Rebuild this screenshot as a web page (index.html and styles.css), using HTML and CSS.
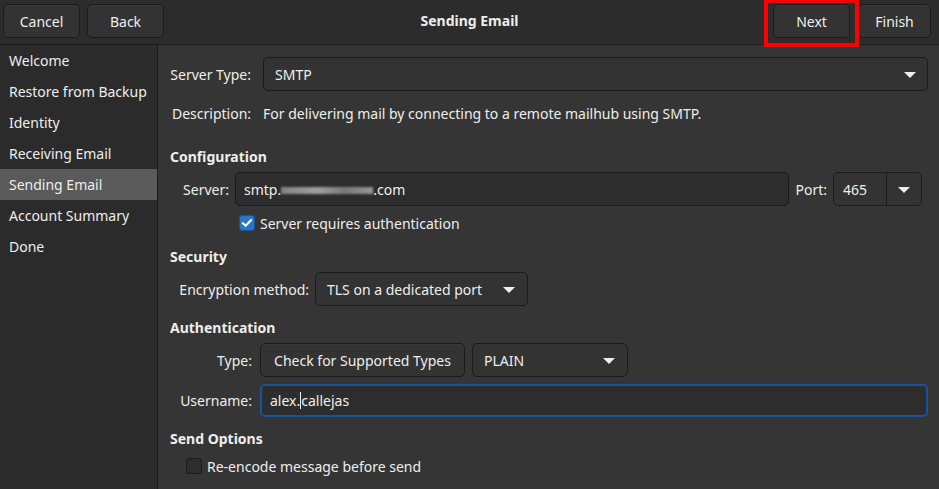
FILE: index.html
```html
<!DOCTYPE html>
<html>
<head>
<meta charset="utf-8">
<link rel="stylesheet" href="styles.css">
</head>
<body>
<div class="window">
  <header class="headerbar">
    <div class="hb-left">
      <button class="btn hb-btn">Cancel</button>
      <button class="btn hb-btn">Back</button>
    </div>
    <div class="hb-title">Sending Email</div>
    <div class="hb-right">
      <button class="btn hb-btn next">Next<span class="annot"></span></button>
      <button class="btn hb-btn finish">Finish</button>
    </div>
  </header>
  <div class="body">
    <nav class="sidebar">
      <div class="side-item">Welcome</div>
      <div class="side-item">Restore from Backup</div>
      <div class="side-item">Identity</div>
      <div class="side-item">Receiving Email</div>
      <div class="side-item selected">Sending Email</div>
      <div class="side-item">Account Summary</div>
      <div class="side-item">Done</div>
    </nav>
    <main class="content">
      <div class="row r-type">
        <span class="lbl lbl-top">Server Type:</span>
        <div class="combo combo-wide"><span>SMTP</span><span class="arrow"></span></div>
      </div>
      <div class="row r-desc">
        <span class="lbl lbl-top">Description:</span>
        <span class="value">For delivering mail by connecting to a remote mailhub using SMTP.</span>
      </div>

      <div class="heading h-config">Configuration</div>
      <div class="row r-server">
        <span class="lbl lbl-server">Server:</span>
        <div class="entry entry-server">smtp.<span class="blur"></span>.com</div>
        <span class="lbl-port">Port:</span>
        <div class="combo port"><span class="port-val">465</span><span class="port-btn"><span class="arrow"></span></span></div>
      </div>
      <div class="row r-check1">
        <span class="check checked"><svg viewBox="0 0 16 16" width="14" height="14"><path d="M3.2 8.2 L6.4 11.2 L12.8 4.6" fill="none" stroke="#fff" stroke-width="2.4" stroke-linecap="round" stroke-linejoin="round"/></svg></span>
        <span class="check-label">Server requires authentication</span>
      </div>

      <div class="heading h-sec">Security</div>
      <div class="row r-enc">
        <span class="lbl lbl-enc">Encryption method:</span>
        <div class="combo combo-enc"><span>TLS on a dedicated port</span><span class="arrow"></span></div>
      </div>

      <div class="heading h-auth">Authentication</div>
      <div class="row r-authtype">
        <span class="lbl lbl-auth">Type:</span>
        <button class="btn btn-check">Check for Supported Types</button>
        <div class="combo combo-plain"><span>PLAIN</span><span class="arrow"></span></div>
      </div>
      <div class="row r-user">
        <span class="lbl lbl-auth">Username:</span>
        <div class="entry entry-user focus">alex.<span class="caret"></span>callejas</div>
      </div>

      <div class="heading h-send">Send Options</div>
      <div class="row r-check2">
        <span class="check"></span>
        <span class="check-label">Re-encode message before send</span>
      </div>
    </main>
  </div>
</div>
</body>
</html>
```

FILE: styles.css
```css
* { box-sizing: border-box; }
html, body {
  margin: 0;
  padding: 0;
  width: 939px;
  height: 489px;
  overflow: hidden;
  background: #353535;
}
body {
  font-family: "Noto Sans", "Open Sans", sans-serif;
  font-size: 14px;
  color: #eeeeec;
}
.window {
  display: flex;
  flex-direction: column;
  height: 489px;
}
.headerbar {
  height: 45px;
  flex: none;
  display: flex;
  align-items: flex-start;
  justify-content: space-between;
  background: #2c2c2c;
  border-bottom: 1px solid #1c1c1c;
  padding: 4px 8px 0 3px;
  position: relative;
}
.hb-left, .hb-right {
  display: flex;
  gap: 7px;
}
.hb-right { gap: 8px; }
.btn {
  font: inherit;
  color: #eeeeec;
  background: #333333;
  border: 1px solid #1b1b1b;
  border-radius: 5px;
  height: 34px;
  padding: 0;
  box-shadow: inset 0 1px rgba(255,255,255,0.03);
}
.hb-btn { width: 77px; }
.finish { width: 73px; }
.next { position: relative; }
.annot {
  position: absolute;
  left: -10px;
  top: -6px;
  width: 95px;
  height: 48px;
  border: 4px solid #ff0000;
  pointer-events: none;
}
.hb-title {
  position: absolute;
  left: 0;
  right: 0;
  top: 0;
  height: 44px;
  line-height: 42px;
  text-align: center;
  font-weight: bold;
  pointer-events: none;
}
.body {
  flex: 1;
  display: flex;
  min-height: 0;
}
.sidebar {
  width: 158px;
  flex: none;
  background: #2b2b2b;
  border-right: 1px solid #1c1c1c;
  padding-top: 0;
}
.side-item {
  height: 31px;
  line-height: 31px;
  padding-left: 9px;
  white-space: nowrap;
}
.side-item.selected {
  background: #5a5a5a;
}
.content {
  flex: 1;
  padding: 12px 11px 0 12px;
  display: flex;
  flex-direction: column;
}
.row {
  display: flex;
  align-items: center;
}
.lbl {
  flex: none;
  text-align: right;
  white-space: nowrap;
}
.lbl-top { width: 93px; padding-right: 12px; }
.value { white-space: nowrap; }
.heading {
  font-weight: bold;
  height: 20px;
  line-height: 20px;
}
.combo {
  display: flex;
  align-items: center;
  justify-content: space-between;
  height: 34px;
  background: #333333;
  border: 1px solid #1b1b1b;
  border-radius: 5px;
  padding: 0 11px 0 11px;
}
.arrow {
  width: 0;
  height: 0;
  border-left: 6px solid transparent;
  border-right: 6px solid transparent;
  border-top: 6px solid #eeeeec;
  margin-top: 1px;
}
.combo-wide { flex: 1; }
.r-type { height: 34px; }
.r-desc { margin-top: 12px; height: 20px; }
.r-desc .lbl-top { padding-left: 2px; }
.h-config { margin-top: 24px; }
.r-server { margin-top: 5px; height: 34px; padding-right: 6px; }
.lbl-server { width: 65px; padding-right: 6px; }
.entry {
  height: 34px;
  background: #2d2d2d;
  border: 1px solid #1b1b1b;
  border-radius: 5px;
  padding: 0 8px;
  display: flex;
  align-items: center;
  white-space: nowrap;
}
.entry-server { flex: 1; }
.blur {
  display: inline-block;
  width: 92px;
  height: 7px;
  margin-top: 3px;
  background: linear-gradient(90deg, #9a9a9a, #bdbdbd 40%, #8c8c8c 70%, #b0b0b0);
  filter: blur(1.2px);
  opacity: 0.8;
}
.lbl-port { margin: 0 6px 0 6px; }
.port {
  width: 89px;
  padding: 0;
}
.port-val { padding-left: 9px; flex: 1; }
.port-btn {
  width: 35px;
  height: 100%;
  border-left: 1px solid #1b1b1b;
  display: flex;
  align-items: center;
  justify-content: center;
}
.r-check1 { margin-top: 7px; height: 20px; padding-left: 69px; }
.check {
  width: 16px;
  height: 16px;
  border-radius: 3px;
  border: 1px solid #1b1b1b;
  background: #2d2d2d;
  display: flex;
  align-items: center;
  justify-content: center;
  flex: none;
}
.check.checked {
  background: #2a76c6;
  border-color: #15539e;
}
.check-label { margin-left: 5px; white-space: nowrap; }
.h-sec { margin-top: 14px; }
.r-enc { margin-top: 5px; height: 34px; }
.lbl-enc { width: 145px; padding-right: 6px; }
.combo-enc { width: 213px; padding-right: 12px; }
.h-auth { margin-top: 12px; }
.r-authtype { margin-top: 5px; height: 34px; }
.lbl-auth { width: 90px; padding-right: 8px; }
.btn-check { width: 205px; }
.combo-plain { width: 156px; margin-left: 7px; padding-right: 12px; }
.r-user { margin-top: 7px; height: 33px; }
.entry-user {
  flex: 1;
  height: 33px;
  padding-left: 9px;
}
.entry.focus {
  border: 2px solid #15539e;
  padding-left: 8px;
}
.caret {
  display: inline-block;
  width: 1px;
  height: 17px;
  background: #eeeeec;
}
.h-send { margin-top: 12px; }
.r-check2 { margin-top: 7px; height: 20px; padding-left: 16px; }
```
